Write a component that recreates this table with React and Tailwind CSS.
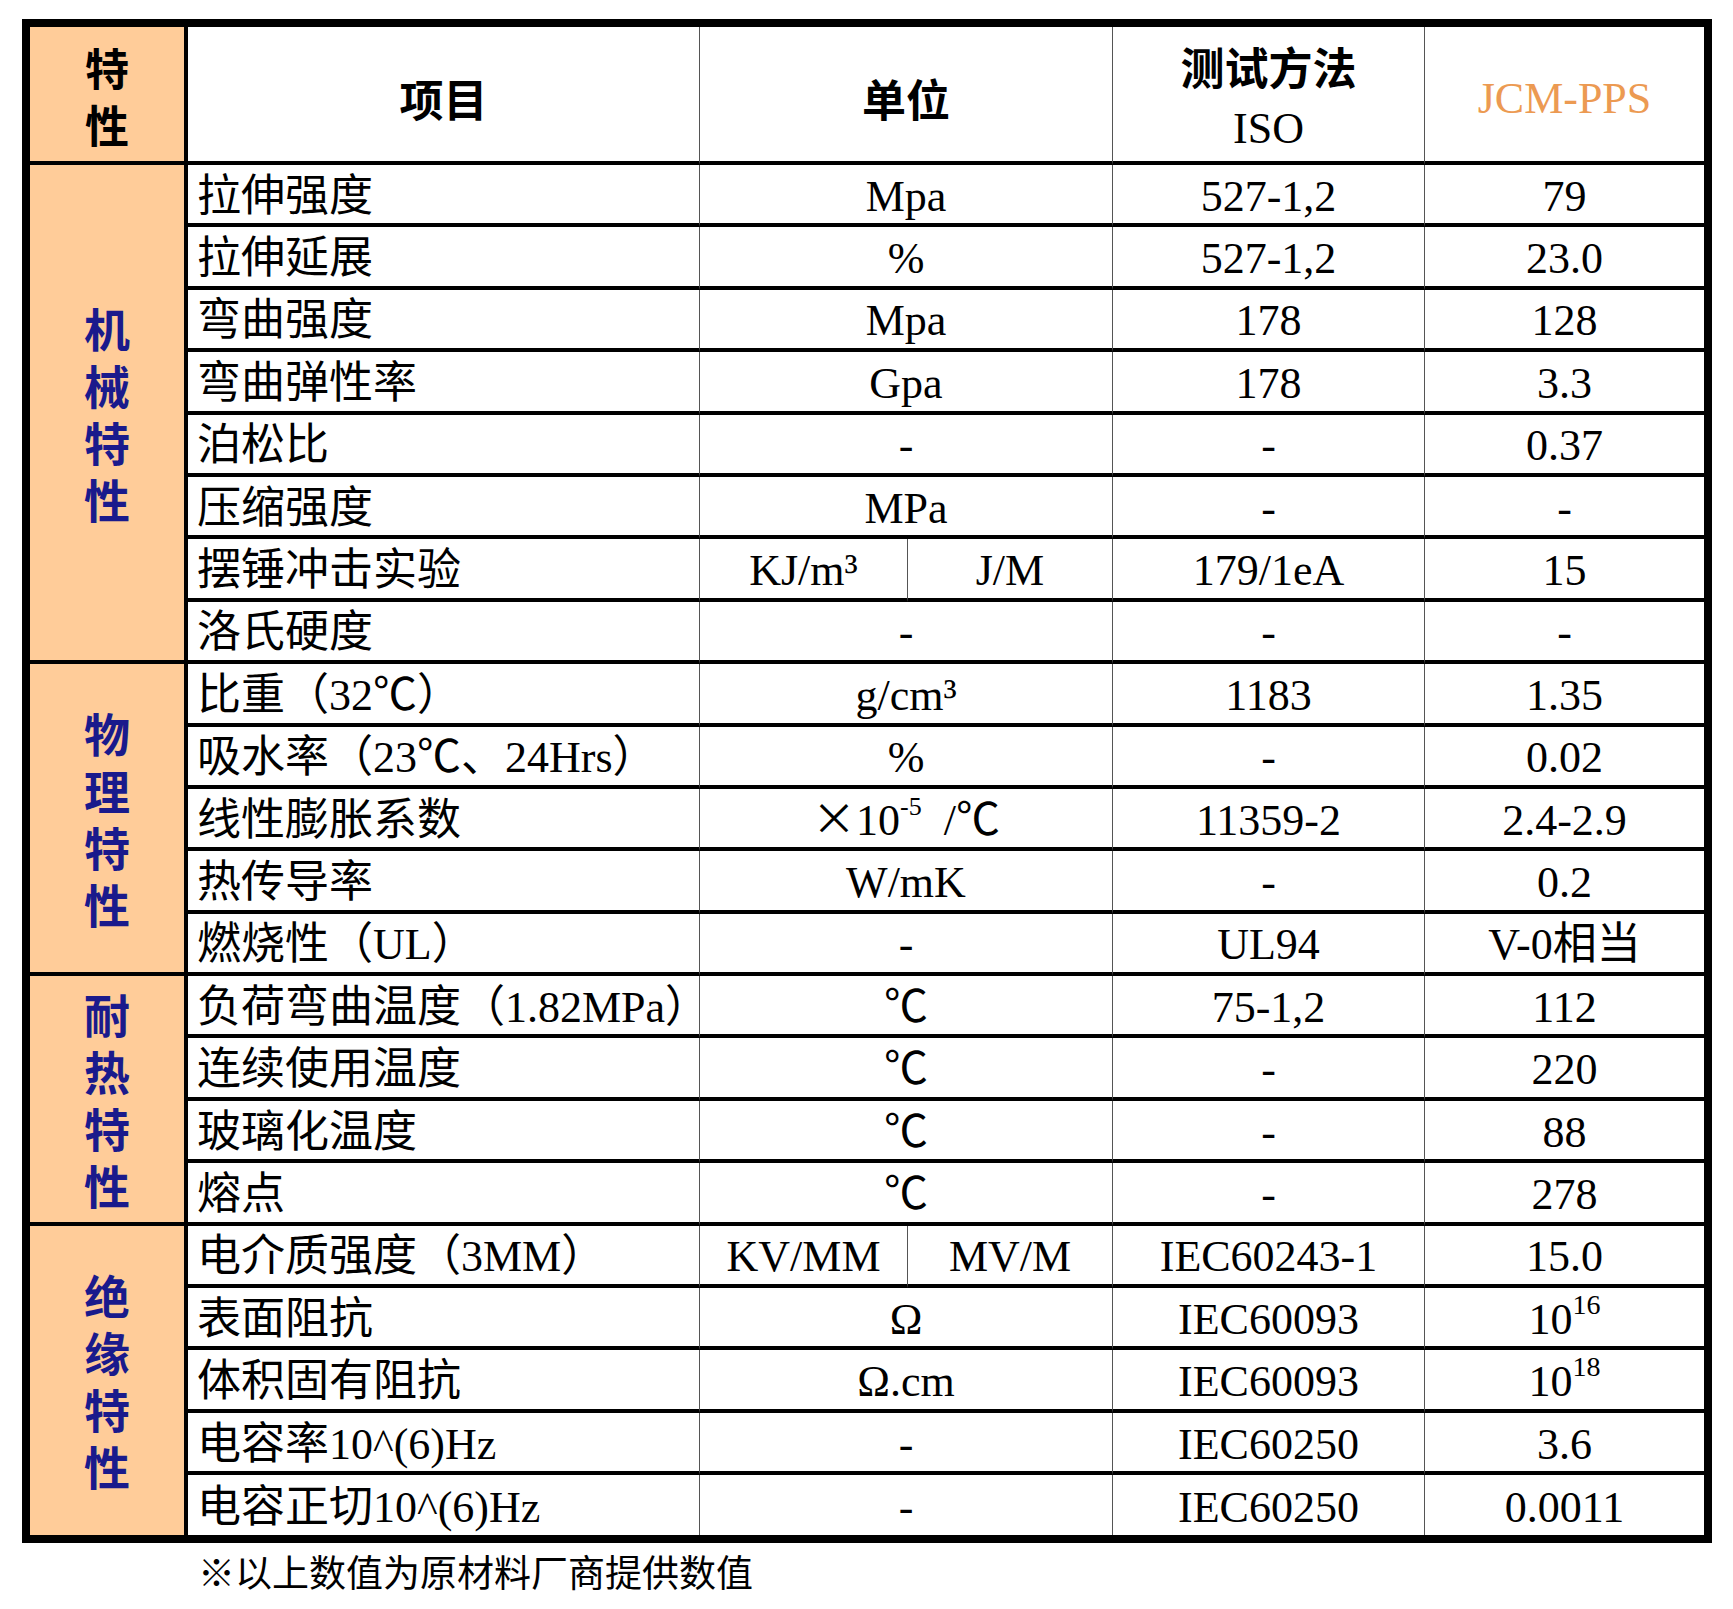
import React from 'react';

const serif = "font-['Liberation_Serif','Noto_Sans_CJK_SC',serif]";
const hei = "font-['Noto_Sans_CJK_SC',sans-serif]";

const groups = [
    {
        label: ['机', '械', '特', '性'],
        rows: [
            ['拉伸强度', 'Mpa', '527-1,2', '79'],
            ['拉伸延展', '%', '527-1,2', '23.0'],
            ['弯曲强度', 'Mpa', '178', '128'],
            ['弯曲弹性率', 'Gpa', '178', '3.3'],
            ['泊松比', '-', '-', '0.37'],
            ['压缩强度', 'MPa', '-', '-'],
            ['摆锤冲击实验', ['KJ/m³', 'J/M'], '179/1eA', '15'],
            ['洛氏硬度', '-', '-', '-'],
        ],
    },
    {
        label: ['物', '理', '特', '性'],
        rows: [
            ['比重（32℃）', 'g/cm³', '1183', '1.35'],
            ['吸水率（23℃、24Hrs）', '%', '-', '0.02'],
            [
                '线性膨胀系数',
                <>
                    <span className={`leading-[0px] ${hei}`}>×</span>10<sup className="relative -top-[20px] text-[26px]">-5</sup>&nbsp;&nbsp;/℃
                </>,
                '11359-2',
                '2.4-2.9',
            ],
            ['热传导率', 'W/mK', '-', '0.2'],
            ['燃烧性（UL）', '-', 'UL94', 'V-0相当'],
        ],
    },
    {
        label: ['耐', '热', '特', '性'],
        rows: [
            ['负荷弯曲温度（1.82MPa）', '℃', '75-1,2', '112'],
            ['连续使用温度', '℃', '-', '220'],
            ['玻璃化温度', '℃', '-', '88'],
            ['熔点', '℃', '-', '278'],
        ],
    },
    {
        label: ['绝', '缘', '特', '性'],
        rows: [
            ['电介质强度（3MM）', ['KV/MM', 'MV/M'], 'IEC60243-1', '15.0'],
            ['表面阻抗', 'Ω', 'IEC60093', <>10<sup className="relative -top-[20px] text-[28px]">16</sup></>],
            ['体积固有阻抗', 'Ω.cm', 'IEC60093', <>10<sup className="relative -top-[20px] text-[28px]">18</sup></>],
            ['电容率10^(6)Hz', '-', 'IEC60250', '3.6'],
            ['电容正切10^(6)Hz', '-', 'IEC60250', '0.0011'],
        ],
    },
];

const App = () => {
    const total = groups.reduce((n, g) => n + g.rows.length, 0);
    let idx = 0;

    return (
        <div className={`min-h-screen bg-white pl-[22px] pt-[19px] text-black ${serif}`}>
            <table className="w-[1690px] table-fixed border-separate border-spacing-0 border-[8px] border-black text-[44px]">
                <colgroup>
                    <col className="w-[158px]" />
                    <col className="w-[512px]" />
                    <col className="w-[208px]" />
                    <col className="w-[205px]" />
                    <col className="w-[312px]" />
                    <col className="w-[279px]" />
                </colgroup>
                <thead>
                    <tr className="h-[138px]">
                        <th className={`border-r-4 border-b-4 border-black bg-[#ffcc99] pt-[4px] font-bold leading-[57px] ${hei}`}>
                            特<br />性
                        </th>
                        <th className={`border-r border-b-4 border-r-[#555] border-b-black pt-[8px] font-bold ${hei}`}>项目</th>
                        <th colSpan={2} className={`border-r border-b-4 border-r-[#555] border-b-black pt-[8px] font-bold ${hei}`}>单位</th>
                        <th className="border-r border-b-4 border-r-[#555] border-b-black pt-[6px] font-normal leading-[58px]">
                            <span className={`font-bold ${hei}`}>测试方法</span>
                            <br />
                            ISO
                        </th>
                        <th className="border-b-4 border-black pt-[10px] font-normal text-[#ec9a52]">JCM-PPS</th>
                    </tr>
                </thead>
                <tbody>
                    {groups.map((g, gi) =>
                        g.rows.map((r, ri) => {
                            idx += 1;
                            const last = idx === total;
                            const bb = last ? '' : 'border-b-4 border-b-black';
                            const h = last ? 'h-[59.6px]' : 'h-[62.4px]';
                            return (
                                <tr key={`${gi}-${ri}`} className={h}>
                                    {ri === 0 && (
                                        <td
                                            rowSpan={g.rows.length}
                                            className={`border-r-4 border-r-black bg-[#ffcc99] text-center align-middle text-[46px] font-bold leading-[57px] text-[#1a1a8c] ${hei} ${gi === groups.length - 1 ? '' : 'border-b-4 border-b-black'}`}
                                        >
                                            {g.label.map((c) => (
                                                <div key={c}>{c}</div>
                                            ))}
                                        </td>
                                    )}
                                    <td className={`whitespace-nowrap border-r border-r-[#555] pl-[9px] pt-[5px] text-left leading-[50px] ${bb}`}>{r[0]}</td>
                                    {Array.isArray(r[1]) ? (
                                        <>
                                            <td className={`border-r border-r-[#555] pt-[5px] text-center leading-[50px] ${bb}`}>{r[1][0]}</td>
                                            <td className={`border-r border-r-[#555] pt-[5px] text-center leading-[50px] ${bb}`}>{r[1][1]}</td>
                                        </>
                                    ) : (
                                        <td colSpan={2} className={`whitespace-nowrap border-r border-r-[#555] pt-[5px] text-center leading-[50px] ${bb}`}>{r[1]}</td>
                                    )}
                                    <td className={`border-r border-r-[#555] pt-[5px] text-center leading-[50px] ${bb}`}>{r[2]}</td>
                                    <td className={`whitespace-nowrap pt-[5px] text-center leading-[50px] ${bb}`}>{r[3]}</td>
                                </tr>
                            );
                        })
                    )}
                </tbody>
            </table>
            <div className={`ml-[176px] mt-[8px] text-[37px] leading-[40px] ${hei}`}>※以上数值为原材料厂商提供数值</div>
        </div>
    );
};

export default App;
